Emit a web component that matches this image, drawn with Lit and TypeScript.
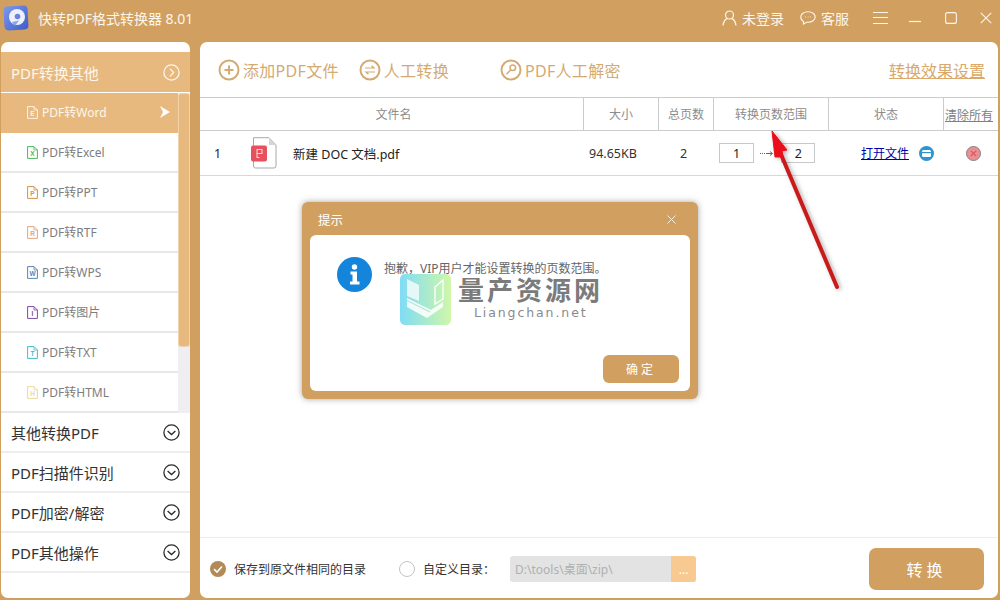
import { LitElement, html, css, svg } from "lit";
import { customElement } from "lit/decorators.js";

const fileIcon = (color: string, letter: string) => html`<svg class="ficon" width="11" height="13" viewBox="0 0 11 13">
  <path d="M.6.6H7L10.4 4V12.4H.6Z" fill="none" stroke=${color} stroke-width="1"/>
  <path d="M7 .6V4H10.4" fill="none" stroke=${color} stroke-width=".8"/>
  <text x="5.5" y="10.4" font-size="6.5" font-family="Liberation Sans" font-weight="700" text-anchor="middle" fill=${color}>${letter}</text>
</svg>`;

const chevCircle = (color: string, dir: "down" | "right", sw = 1.3) => html`<svg width="17" height="17" viewBox="0 0 17 17">
  <circle cx="8.5" cy="8.5" r="7.6" fill="none" stroke=${color} stroke-width=${sw}/>
  ${dir === "down"
    ? svg`<path d="M4.6 7L8.5 10.6 12.4 7" fill="none" stroke=${color} stroke-width=${sw}/>`
    : svg`<path d="M7 4.6L10.6 8.5 7 12.4" fill="none" stroke=${color} stroke-width=${sw}/>`}
</svg>`;

const items = [
  ["PDF转Word", "#fdf3e3", "E"],
  ["PDF转Excel", "#4cb65a", "X"],
  ["PDF转PPT", "#d2914a", "P"],
  ["PDF转RTF", "#e0a583", "R"],
  ["PDF转WPS", "#5a84b5", "W"],
  ["PDF转图片", "#7d4a9e", "I"],
  ["PDF转TXT", "#3fbccd", "T"],
  ["PDF转HTML", "#ecdc9a", "H"],
];
const groups = ["其他转换PDF", "PDF扫描件识别", "PDF加密/解密", "PDF其他操作"];

@customElement("app-root")
export class AppRoot extends LitElement {
  static styles = css`
    :host {
      display: block;
      width: 1000px;
      height: 600px;
      position: relative;
      overflow: hidden;
      background: #d1a061;
      font-family: "Noto Sans", "Noto Sans CJK SC", sans-serif;
      font-size: 12px;
      color: #333;
    }
    svg { display: block; flex: none; }
    .title {
      height: 42px;
      display: flex;
      align-items: center;
      color: #fdf6ea;
      padding: 0 0 7px 3px;
      box-sizing: border-box;
    }
    .logo {
      width: 26px;
      height: 26px;
      margin-right: 9px;
    }
    .appname { font-size: 14px; flex: 1; }
    .tact { display: flex; align-items: center; gap: 5px; font-size: 14px; }
    .t1 { margin-right: 16px; }
    .t2 { margin-right: 24px; }
    .t3 { margin-right: 21px; }
    .t4 { margin-right: 24px; }
    .t5 { margin-right: 23px; }
    .t6 { margin-right: 8px; }
    .body {
      height: 556px;
      display: flex;
      gap: 10px;
      padding-left: 1px;
      padding-right: 2px;
    }
    .side {
      width: 189px;
      background: #fff;
      border-radius: 7px;
      padding-top: 10px;
      box-sizing: border-box;
      overflow: hidden;
      flex: none;
    }
    .shead {
      height: 41px;
      box-sizing: border-box;
      background: #e8b97f;
      color: #fdf6ea;
      display: flex;
      align-items: center;
      justify-content: space-between;
      font-size: 15px;
      padding: 0 10px;
      border-bottom: 1px solid #fff;
    }
    .slist { display: flex; height: 320px; }
    .sitems { width: 177px; flex: none; }
    .sitem {
      height: 40px;
      box-sizing: border-box;
      border-bottom: 2px solid #e8e8e8;
      display: flex;
      align-items: center;
      padding-left: 26px;
      color: #7d7d7d;
      font-size: 12px;
      gap: 4px;
    }
    .sitem.on {
      background: #e8b97f;
      color: #fdf6ea;
      border-bottom-color: #e8b97f;
    }
    .sitem .play { margin-left: auto; margin-right: 8px; }
    .ficon { margin-top: 1px; }
    .track {
      width: 12px;
      flex: none;
      background: #eeeef3;
    }
    .thumb {
      height: 254px;
      background: #e8b97f;
      border-radius: 3px;
      border: 1px solid #f0d3ab;
      box-sizing: border-box;
    }
    .group {
      height: 40px;
      box-sizing: border-box;
      border-bottom: 2px solid #eeeeee;
      display: flex;
      align-items: center;
      justify-content: space-between;
      padding: 0 10px;
      font-size: 15px;
      color: #333;
    }
    .main {
      flex: 1;
      background: #fff;
      border-radius: 7px;
      display: flex;
      flex-direction: column;
      overflow: hidden;
    }
    .tools {
      height: 56px;
      box-sizing: border-box;
      display: flex;
      align-items: center;
      padding: 0 13px 0 18px;
      color: #d3aa72;
      font-size: 16px;
      letter-spacing: 0.3px;
      border-bottom: 1px solid #c9cdd0;
    }
    .tool { display: flex; align-items: center; gap: 3px; }
    .tool.a { margin-right: 20px; }
    .tool.b { margin-right: 51px; }
    .effect {
      margin-left: auto;
      text-decoration: underline;
      font-size: 16px;
      letter-spacing: 0;
      color: #d9a86a;
    }
    .grid {
      display: grid;
      grid-template-columns: 384px 75px 55px 115px 115px 1fr;
    }
    .thead {
      height: 33px;
      box-sizing: border-box;
      border-bottom: 1px solid #c9cdd0;
      color: #8c8c8c;
      font-size: 12px;
    }
    .thead > div {
      display: flex;
      align-items: center;
      justify-content: center;
      border-right: 1px solid #c9cdd0;
    }
    .thead > .namehead { padding-left: 4px; }
    .thead > div:last-child {
      border-right: none;
      text-decoration: underline;
      justify-content: flex-start;
      padding-left: 1px;
      padding-top: 2px;
      color: #808080;
    }
    .trow {
      height: 45px;
      box-sizing: border-box;
      border-bottom: 1px solid #d5d9dc;
      color: #333;
      font-size: 12.5px;
    }
    .trow > div { display: flex; align-items: center; justify-content: center; }
    .trow > .namecell { justify-content: flex-start; padding-left: 14px; color: #222; }
    .trow > .size { justify-content: flex-start; padding-left: 5px; }
    .trow > .pages { padding-right: 6px; }
    .trow > .del { padding-left: 4px; }
    .idx { width: 37px; }
    .fname { margin-left: 16px; }
    .trow > .range { gap: 6px; padding-left: 5px; justify-content: flex-start; }
    .num {
      width: 35px;
      height: 20px;
      box-sizing: border-box;
      border: 1px solid #c8c8c8;
      display: flex;
      align-items: center;
      justify-content: center;
      color: #222;
    }
    .num.second { width: 34px; margin-left: 2px; justify-content: flex-end; padding-right: 12px; }
    .trow > .st { gap: 10px; justify-content: flex-start; padding-left: 32px; }
    .lnk { color: #0000aa; text-decoration: underline; font-size: 12px; }
    .spacer { flex: 1; border-bottom: 1px solid #ececec; }
    .foot {
      height: 60px;
      flex: none;
      display: flex;
      align-items: center;
      padding: 1px 14px 0 10px;
      box-sizing: border-box;
      color: #333;
      font-size: 12px;
    }
    .chk { display: flex; align-items: center; gap: 8px; }
    .chk.first { margin-right: 33px; }
    .radio {
      width: 16px;
      height: 16px;
      box-sizing: border-box;
      border: 1px solid #c4c4c4;
      border-radius: 50%;
    }
    .path {
      margin-left: 15px;
      width: 186px;
      height: 26px;
      border-radius: 3px;
      background: #e3e3e3;
      color: #b0b0b0;
      display: flex;
      align-items: center;
      padding-left: 5px;
      box-sizing: border-box;
      overflow: hidden;
    }
    .dots {
      margin-left: auto;
      width: 25px;
      height: 26px;
      background: #f8ca92;
      color: #fff;
      text-align: center;
      line-height: 28px;
    }
    .convert {
      margin-left: auto;
      width: 115px;
      height: 42px;
      border-radius: 7px;
      background: #d1a061;
      color: #fff;
      font-size: 16px;
      letter-spacing: 4px;
      display: flex;
      align-items: center;
      justify-content: center;
    }
    .modal {
      position: absolute;
      left: 302px;
      top: 202px;
      width: 396px;
      height: 197px;
      box-sizing: border-box;
      background: #d1a061;
      border-radius: 6px;
      box-shadow: 0 0 6px rgba(90, 90, 90, 0.55);
      padding: 0 8px 8px;
      display: flex;
      flex-direction: column;
    }
    .mhead {
      height: 33px;
      flex: none;
      display: flex;
      align-items: center;
      justify-content: space-between;
      padding: 2px 14px 0 8px;
      box-sizing: border-box;
      color: #fff;
      font-size: 12.5px;
    }
    .mbody {
      flex: 1;
      background: #fff;
      border-radius: 6px;
      display: flex;
      flex-direction: column;
      padding: 22px 11px 8px 27px;
      box-sizing: border-box;
    }
    .msg { display: flex; gap: 12px; color: #666; font-size: 12px; }
    .msg span { margin-top: 3px; line-height: 18px; }
    .ok {
      margin-top: auto;
      align-self: flex-end;
      width: 76px;
      height: 28px;
      border-radius: 6px;
      background: #d1a061;
      color: #fff;
      font-size: 12px;
      letter-spacing: 3px;
      display: flex;
      align-items: center;
      justify-content: center;
    }
    .wm {
      position: absolute;
      left: 400px;
      top: 274px;
      display: flex;
      gap: 8px;
    }
    .wmtext { color: #7b7b7b; padding-top: 3px; }
    .wm1 { font-size: 26px; line-height: 26px; font-weight: 700; letter-spacing: 3px; white-space: nowrap; margin-left: -1px; }
    .wm2 { line-height: 16px; letter-spacing: 1.9px; margin-top: 2px; margin-left: 15px; font-family: "DejaVu Sans", sans-serif; font-size: 12.5px; color: #8a8a8a; white-space: nowrap; }
    .arrow { position: absolute; left: 760px; top: 120px; }
  `;

  render() {
    return html`
      <div class="title">
        <svg class="logo" viewBox="0 0 26 26">
          <defs><linearGradient id="lg" x1="0" y1="0" x2="1" y2="1"><stop offset="0" stop-color="#7a9af0"/><stop offset="1" stop-color="#3f5ac8"/></linearGradient></defs>
          <rect x="1" y="1" width="24" height="24" rx="4" fill="url(#lg)" transform="rotate(-3 13 13)"/>
          <circle cx="14" cy="12" r="8" fill="#eef1fb"/>
          <circle cx="14.500" cy="11.500" r="2.800" fill="#6a84de"/>
          <path d="M9 17L16 15.500 12 21Z" fill="#8ea2e8"/>
        </svg>
        <div class="appname">快转PDF格式转换器 8.01</div>
        <div class="tact t1">
          <svg width="15" height="16" viewBox="0 0 15 16" fill="none" stroke="#fdf6ea" stroke-width="1.2"><circle cx="7.5" cy="5" r="4"/><path d="M1 15.5Q2 9.5 5.2 8.6M14 15.5Q13 9.5 9.8 8.6"/></svg>
          <span>未登录</span>
        </div>
        <div class="tact t2">
          <svg width="16" height="14" viewBox="0 0 16 14" fill="none" stroke="#fdf6ea" stroke-width="1.1"><path d="M8 .8C12 .8 15.2 3 15.2 6S12 11.2 8 11.2H6.5L3.5 13V10.5C1.8 9.6.8 7.9.8 6 .8 3 4 .8 8 .8Z"/><path d="M5 6H5.8M7.7 6H8.5M10.3 6H11.1" stroke-width="1.2"/></svg>
          <span>客服</span>
        </div>
        <svg class="t3" width="15" height="12" viewBox="0 0 15 12" stroke="#fdf6ea"><path d="M0 .5H15M0 5.5H15M0 11.5H15"/></svg>
        <svg class="t4" width="12" height="12" viewBox="0 0 12 12" stroke="#fdf6ea" stroke-width="1.2"><path d="M0 9.5H12"/></svg>
        <svg class="t5" width="12" height="12" viewBox="0 0 12 12" fill="none" stroke="#fdf6ea" stroke-width="1.1"><rect x=".6" y=".6" width="10.8" height="10.8" rx="2"/></svg>
        <svg class="t6" width="12" height="12" viewBox="0 0 12 12" stroke="#fdf6ea" stroke-width="1.1"><path d="M.8.8L11.2 11.2M11.2.8L.8 11.2"/></svg>
      </div>
      <div class="body">
        <aside class="side">
          <div class="shead"><span>PDF转换其他</span>${chevCircle("#fdf6ea", "right")}</div>
          <div class="slist">
            <div class="sitems">
              ${items.map(([n, c, l], i) => html`<div class="sitem ${i === 0 ? "on" : ""}">
                ${fileIcon(c, l)}<span>${n}</span>
                ${i === 0 ? html`<svg class="play" width="10" height="12" viewBox="0 0 10 12"><path d="M0 0L10 6 0 12 3 6Z" fill="#fff"/></svg>` : ""}
              </div>`)}
            </div>
            <div class="track"><div class="thumb"></div></div>
          </div>
          ${groups.map((g) => html`<div class="group"><span>${g}</span>${chevCircle("#2b2b2b", "down")}</div>`)}
        </aside>
        <main class="main">
          <div class="tools">
            <div class="tool a">
              <svg width="22" height="22" viewBox="0 0 22 22" fill="none" stroke="#d3aa72" stroke-width="2"><circle cx="11" cy="11" r="9.5"/><path d="M11 6.5V15.5M6.5 11H15.5"/></svg>
              <span>添加PDF文件</span>
            </div>
            <div class="tool b">
              <svg width="22" height="22" viewBox="0 0 22 22" fill="none" stroke="#d3aa72" stroke-width="1.5"><circle cx="11" cy="11" r="9.5" stroke-width="2"/><path d="M6 9H15L12.5 6.8M16 13H7L9.5 15.2" stroke-width="1.2"/></svg>
              <span>人工转换</span>
            </div>
            <div class="tool">
              <svg width="22" height="22" viewBox="0 0 22 22" fill="none" stroke="#d3aa72" stroke-width="1.5"><circle cx="11" cy="11" r="9.5" stroke-width="2"/><circle cx="12.8" cy="8.8" r="2.8"/><path d="M10.6 11L6.5 15.2"/></svg>
              <span>PDF人工解密</span>
            </div>
            <div class="effect">转换效果设置</div>
          </div>
          <div class="grid thead">
            <div class="namehead">文件名</div><div>大小</div><div>总页数</div><div>转换页数范围</div><div>状态</div><div>清除所有</div>
          </div>
          <div class="grid trow">
            <div class="namecell">
              <span class="idx">1</span>
              <svg width="26" height="32" viewBox="0 0 26 32">
                <path d="M2.5 .7H18L25 8V29Q25 31 23 31H4.5Q2.5 31 2.5 29Z" fill="#fff" stroke="#a8a8a8"/>
                <path d="M18 .7V8H25Z" fill="#d5d5d5"/>
                <rect x="0" y="8.500" width="16" height="16" rx="2" fill="#e8505b"/>
                <path d="M6 12.500H11V16.500H6ZM6 12.500V20.500H8.500" fill="none" stroke="#f9d5d5" stroke-width="1.100" stroke-linejoin="round"/>
              </svg>
              <span class="fname">新建 DOC 文档.pdf</span>
            </div>
            <div class="size">94.65KB</div>
            <div class="pages">2</div>
            <div class="range">
              <span class="num">1</span>
              <svg width="13" height="7" viewBox="0 0 13 7" fill="none" stroke="#666"><path d="M0 3.500H7" stroke-dasharray="1 1"/><path d="M7 3.500H12M10 1.500L12.500 3.500 10 5.500"/></svg>
              <span class="num second">2</span>
            </div>
            <div class="st">
              <span class="lnk">打开文件</span>
              <svg width="15" height="15" viewBox="0 0 15 15"><circle cx="7.500" cy="7.500" r="7.500" fill="#2f95cc"/><rect x="3" y="4" width="9" height="7" rx="1.500" fill="#fff"/><rect x="3" y="6" width="9" height="1.200" fill="#2f95cc"/></svg>
            </div>
            <div class="del">
              <svg width="15" height="15" viewBox="0 0 15 15"><circle cx="7.500" cy="7.500" r="7" fill="#ea8f93" stroke="#8a8080"/><path d="M4.800 4.800L10.200 10.200M10.200 4.800L4.800 10.200" stroke="#cf5a60" stroke-width="1.200"/></svg>
            </div>
          </div>
          <div class="spacer"></div>
          <div class="foot">
            <div class="chk first">
              <svg width="16" height="16" viewBox="0 0 16 16"><circle cx="8" cy="8" r="8" fill="#b18a55"/><path d="M4 8.200L7 11 12 5.500" fill="none" stroke="#fff" stroke-width="1.600"/></svg>
              <span>保存到原文件相同的目录</span>
            </div>
            <div class="chk">
              <div class="radio"></div>
              <span>自定义目录：</span>
            </div>
            <div class="path"><span>D:\\tools\\桌面\\zip\\</span><span class="dots">...</span></div>
            <div class="convert">转换</div>
          </div>
        </main>
      </div>
      <svg class="arrow" width="100" height="180" viewBox="0 0 100 180">
        <defs><filter id="sh" x="-30%" y="-10%" width="160%" height="120%"><feDropShadow dx="2" dy="1" stdDeviation="2" flood-color="#000" flood-opacity=".3"/></filter></defs>
        <g filter="url(#sh)">
          <path d="M77 167L20 32" stroke="#c81e1e" stroke-width="4" stroke-linecap="round"/>
          <path d="M12 11L27 30 22 31 23 37 15 37Z" fill="#ea0f1a" stroke="#ea0f1a" stroke-linejoin="round"/>
        </g>
      </svg>
      <div class="modal">
        <div class="mhead">
          <span>提示</span>
          <svg width="9" height="9" viewBox="0 0 9 9" stroke="#fbeedd"><path d="M.5.500L8.500 8.500M8.500.500L.5 8.500"/></svg>
        </div>
        <div class="mbody">
          <div class="msg">
            <svg width="35" height="35" viewBox="0 0 35 35"><circle cx="17.500" cy="17.500" r="17.500" fill="#1585dc"/><circle cx="17.500" cy="10" r="2.700" fill="#fff"/><path d="M13.500 14.500H20V24.500H22.500V27.500H13V24.500H15.500V17.500H13.500Z" fill="#fff"/></svg>
            <span>抱歉，VIP用户才能设置转换的页数范围。</span>
          </div>
          <div class="ok">确定</div>
        </div>
      </div>
      <div class="wm">
        <svg width="51" height="51" viewBox="0 0 51 51">
          <defs><linearGradient id="wg" x1="0" y1="0" x2="1" y2="0"><stop offset="0" stop-color="#7fdcf5"/><stop offset="1" stop-color="#d0f7a9"/></linearGradient></defs>
          <rect width="51" height="51" rx="5" fill="url(#wg)"/>
          <path d="M7 5L19 11V27L7 22Z" fill="#fff" opacity=".75"/>
          <path d="M43 6L35 13V30L43 25Z" fill="none" stroke="#fff" stroke-width="1.300"/>
          <path d="M7 24L31 36 43 28V33L27 44 7 33Z" fill="#fff" opacity=".85"/>
          <path d="M7 26.500L30 38" stroke="#8fd5c8" stroke-width=".8"/>
        </svg>
        <div class="wmtext">
          <div class="wm1">量产资源网</div>
          <div class="wm2">Liangchan.net</div>
        </div>
      </div>
    `;
  }
}
